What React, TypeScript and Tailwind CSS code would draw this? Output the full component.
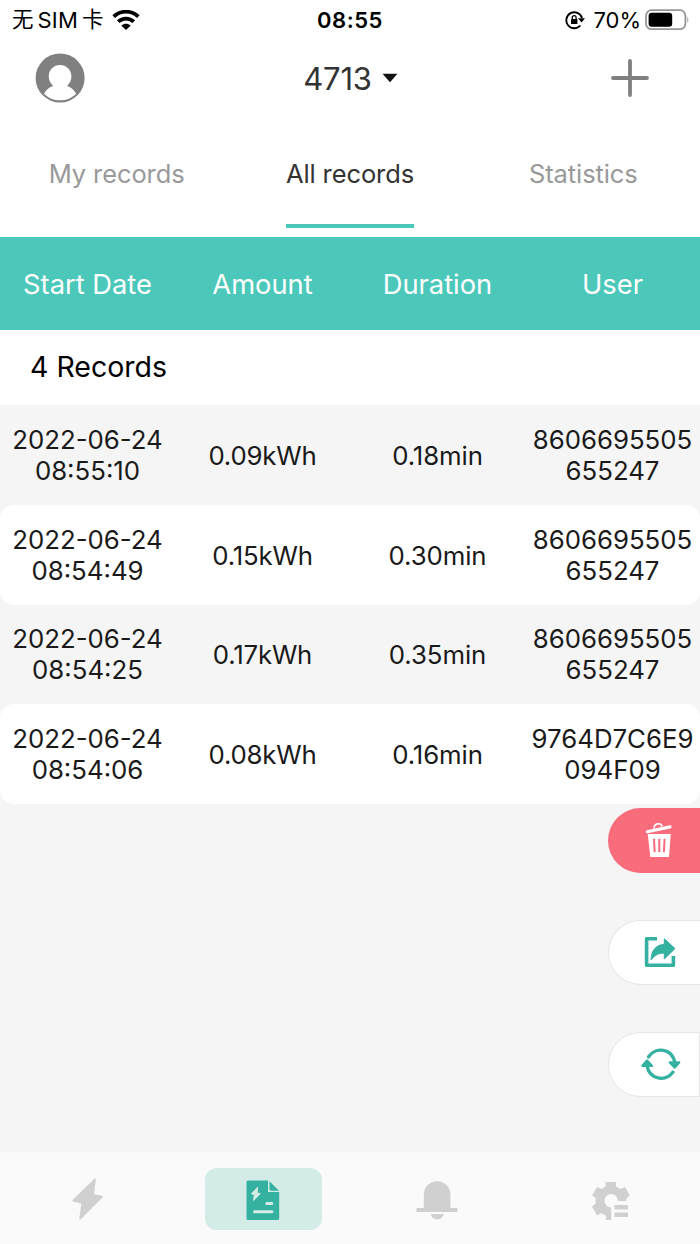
const tabs = [
  { label: 'My records', active: false },
  { label: 'All records', active: true },
  { label: 'Statistics', active: false },
]

const columns = ['Start Date', 'Amount', 'Duration', 'User']

const records = [
  { date: '2022-06-24', time: '08:55:10', amount: '0.09kWh', duration: '0.18min', user: '8606695505655247' },
  { date: '2022-06-24', time: '08:54:49', amount: '0.15kWh', duration: '0.30min', user: '8606695505655247' },
  { date: '2022-06-24', time: '08:54:25', amount: '0.17kWh', duration: '0.35min', user: '8606695505655247' },
  { date: '2022-06-24', time: '08:54:06', amount: '0.08kWh', duration: '0.16min', user: '9764D7C6E9094F09' },
]

function StatusBar() {
  return (
    <div className="grid h-10 grid-cols-3 items-center text-black">
      <div className="flex items-center pl-3">
        <span className="flex items-center gap-1 text-[21.5px] leading-none whitespace-nowrap">
          <span>无</span>
          <span className="text-[22px] tracking-[0.2px]">SIM</span>
          <span>卡</span>
        </span>
        <svg className="ml-2 h-[21px] w-7" viewBox="0 0 28 21" fill="none" stroke="currentColor">
          <path d="M1.7 6.7C8.7 0 19.3 0 26.3 6.7" strokeWidth="3.8" />
          <path d="M6.2 11.700c4.600-4.200 11-4.200 15.600 0" strokeWidth="3.700" />
          <path d="M14 20l-4.600-4.300c2.800-2.500 6.400-2.500 9.200 0z" fill="currentColor" stroke="none" />
        </svg>
      </div>
      <span className="-mt-px text-center text-[22px] leading-none font-semibold tracking-[0.5px]">08:55</span>
      <div className="-mt-px flex items-center justify-end pr-2.5">
        <svg className="h-5 w-5" viewBox="0 0 20 20" fill="none" stroke="currentColor">
          <path d="M15.400 15.500A8 8 0 1 1 17 8" strokeWidth="1.900" />
          <path d="M13 8.200h7l-3.500 4.400z" fill="currentColor" stroke="none" />
          <rect x="6" y="9" width="6.400" height="5" rx=".6" fill="currentColor" stroke="none" />
          <path d="M7.300 9V7.600a1.900 1.900 0 0 1 3.800 0V9" strokeWidth="1.300" />
        </svg>
        <span className="ml-2 text-[22px] leading-none">70%</span>
        <svg className="ml-1 h-[22px] w-[45px]" viewBox="0 0 45 22" fill="none">
          <rect x="1" y="1.200" width="39.400" height="19" rx="5.500" stroke="#969696" strokeWidth="1.800" />
          <rect x="3.600" y="3.800" width="23.600" height="14" rx="3" fill="#000" />
          <path d="M42.300 7.800q2.200 3 0 6z" fill="#969696" />
        </svg>
      </div>
    </div>
  )
}

function Header() {
  return (
    <header className="grid h-[76px] grid-cols-3 items-center px-[35px]">
      <svg className="h-[50px] w-[50px]" viewBox="0 0 50 50">
        <circle cx="25.1" cy="25" r="24.5" fill="#808080" />
        <path
          d="M25 12c-6.400 0-11.200 4.900-11.200 11.300 0 4 1.800 7.600 4.400 9.700-3.600 1-7 3.600-9.200 7.700 4.300 4.300 9.800 6.600 16.100 6.600s11.800-2.300 16.100-6.600c-2.200-4.100-5.600-6.700-9.200-7.700 2.600-2.100 4.400-5.700 4.400-9.700C36.400 16.900 31.500 12 25 12z"
          fill="#fff"
        />
      </svg>
      <button className="flex items-center justify-center pl-px text-[31px] leading-none tracking-[-0.2px] text-[#333]">
        4713
        <svg className="ml-2.5 h-2.5 w-4" viewBox="0 0 16 10">
          <path d="M.5.800h15L8 9.200z" fill="#111" />
        </svg>
      </button>
      <svg className="mr-4 h-[38px] w-[38px] justify-self-end" viewBox="0 0 38 38" fill="none" stroke="#808080">
        <path d="M19 2v34M2 19h34" strokeWidth="3.800" strokeLinecap="round" />
      </svg>
    </header>
  )
}

function Tabs() {
  return (
    <nav className="grid h-28 grid-cols-3 text-[25.5px] leading-none">
      {tabs.map(({ label, active }) => (
        <div key={label} className="flex justify-center">
          <span
            className={
              active
                ? 'border-b-4 border-[#4cc8ba] pt-[45px] tracking-[-0.1px] text-[#333]'
                : 'border-b-4 border-transparent pt-[45px] tracking-[-0.1px] text-[#999]'
            }
          >
            {label}
          </span>
        </div>
      ))}
    </nav>
  )
}

function RecordsTable() {
  return (
    <section>
      <div className="mt-[9px] grid h-[93px] grid-cols-4 items-center bg-[#4cc8ba] pt-[3px] text-center text-[27.3px] text-white">
        {columns.map((name) => (
          <span key={name}>{name}</span>
        ))}
      </div>
      <p className="flex h-[75px] items-center pl-[30px] text-[28.5px] text-black">4 Records</p>
      <div className="bg-[#f5f5f5] text-[25.800px] leading-[31px] text-[#1a1a1a]">
        {records.map(({ date, time, amount, duration, user }) => (
          <div
            key={time}
            className="grid h-[99.75px] grid-cols-4 items-center rounded-[14px] text-center even:bg-white"
          >
            <span>
              {date}
              <br />
              {time}
            </span>
            <span className="pt-px tracking-[-0.2px]">{amount}</span>
            <span className="pt-px tracking-[-0.1px]">{duration}</span>
            <span>
              {user.slice(0, 10)}
              <br />
              {user.slice(10)}
            </span>
          </div>
        ))}
      </div>
    </section>
  )
}

function Actions() {
  return (
    <div className="mt-[3.500px] flex flex-col items-end gap-[47px]">
      <button aria-label="Delete" className="flex h-[65px] w-[92px] items-center rounded-l-full bg-[#f86c7c] pl-[37px]">
        <svg className="h-9 w-7" viewBox="0 0 28 36" fill="none">
          <path d="M2.300 9.700L25 4.900" stroke="#fff" strokeWidth="3.200" strokeLinecap="round" />
          <path d="M9 6.500C9 .900 16 .500 17 4.500" stroke="#fff" strokeWidth="1.600" />
          <path d="M2.700 12h23L24 35H5.400z" fill="#fff" />
          <path d="M9 16.700l.700 13.400M14.300 16.700v13.400M19.600 16.700l-.700 13.400" stroke="#f86c7c" strokeWidth="2" />
        </svg>
      </button>
      <button
        aria-label="Share"
        className="flex h-[65px] w-[92px] items-center rounded-l-full border border-r-0 border-[#e6e6e6] bg-white pl-[35px] pb-px"
      >
        <svg className="h-8 w-8" viewBox="0 0 32 32" fill="none">
          <path d="M13 2.700H2.600v26.600h26.800V20" stroke="#35b1a1" strokeWidth="3.600" strokeLinejoin="round" />
          <path
            d="M20.300 2.800L31 12.600 20.300 23v-5.800c-5.800-.200-9.300 1.700-13.200 6.700C7.200 14.500 11.800 8.900 20.300 8.300z"
            fill="#35b1a1"
            stroke="#35b1a1"
            strokeLinejoin="round"
          />
        </svg>
      </button>
      <button
        aria-label="Refresh"
        className="flex h-[65px] w-[92px] items-center rounded-l-full border border-[#e6e6e6] bg-white pl-8"
      >
        <svg className="h-8 w-10" viewBox="0 0 40 32" fill="none" stroke="#35b1a1" strokeWidth="3.400">
          <path d="M7.600 8.800C14.800-1.800 31.300.300 33.800 14.500" strokeLinecap="round" />
          <path d="M31.800 24.200C24.500 34.300 8.300 31.800 5.800 17" strokeLinecap="round" />
          <path d="M28.800 14.500h9.400l-4.500 5z" fill="#35b1a1" strokeWidth="2.400" strokeLinejoin="round" />
          <path d="M1.500 17.800h9.400L6 12.600z" fill="#35b1a1" strokeWidth="2.400" strokeLinejoin="round" />
        </svg>
      </button>
    </div>
  )
}

function BottomNav() {
  return (
    <nav className="grid h-[92px] grid-cols-4 items-center justify-items-center bg-[#fafafa] pb-[3px]">
      <svg className="mt-1 h-[42px] w-8" viewBox="0 0 32 42">
        <path
          d="M23 1.500L1.200 22.700 10.300 25 8.200 40.500 30 18.700 21 16.800z"
          fill="#d0d0d0"
          stroke="#d0d0d0"
          strokeWidth="1.800"
          strokeLinejoin="round"
        />
      </svg>
      <div className="mt-1 ml-px flex h-[62px] w-[117px] items-center justify-center rounded-xl bg-[#d3ece7]">
        <svg className="mt-0.5 h-10 w-[34px]" viewBox="0 0 34 40">
          <path d="M2 .5h20v11.500h11.200V38.500q0 1.500-1.500 1.500H2Q.5 40 .5 38.500V2Q.5.500 2 .500z" fill="#35b1a1" />
          <path d="M23.500 1.200l9.500 9.500h-7.800q-1.700 0-1.700-1.700z" fill="#35b1a1" />
          <path
            d="M11.600 7.300L5.400 13.800l3 .700-.800 6 6.700-7-3.100-.500z"
            fill="#d3ece7"
            stroke="#d3ece7"
            strokeLinejoin="round"
          />
          <path d="M20.800 23.600h5M8.500 31.800h17.500" stroke="#d3ece7" strokeWidth="3" strokeLinecap="round" />
        </svg>
      </div>
      <svg className="mt-1.5 mr-0.5 h-10 w-[42px]" viewBox="0 0 42 40" fill="#d0d0d0">
        <path d="M7.800 28V14.500a13.300 13.300 0 0 1 26.600 0V28H41.500v4H.5v-4z" />
        <path d="M15 34h12.500c-.5 7.200-12 7.200-12.500 0z" />
      </svg>
      <svg className="mt-2 mr-[3px] h-[38px] w-[38px]" viewBox="0 0 38 38" fill="#d0d0d0">
        <path d="M13.600 0h10.400v4.500l4.500 2.500 4.300-2.100 5.200 8.700-3.500 2.600v2.800H25.900a6.700 6.700 0 1 0-6.700 6.500V38h-5.300v-4.200l-4.500-2.500-4.500 2L0 24.500l3.600-2.500v-6.200L0 13.400 5 4.900l4.500 2.100 4.100-2.500z" />
        <rect x="22.500" y="23" width="13.500" height="4.500" rx=".5" />
        <rect x="22.500" y="30.500" width="13.500" height="4.500" rx=".5" />
      </svg>
    </nav>
  )
}

export default function App() {
  return (
    <div className="flex h-[1244px] w-[700px] flex-col overflow-hidden bg-white font-['Inter','Noto_Sans_CJK_SC',sans-serif]">
      <StatusBar />
      <Header />
      <Tabs />
      <RecordsTable />
      <div className="flex-1 bg-[#f5f5f5]">
        <Actions />
      </div>
      <BottomNav />
    </div>
  )
}
